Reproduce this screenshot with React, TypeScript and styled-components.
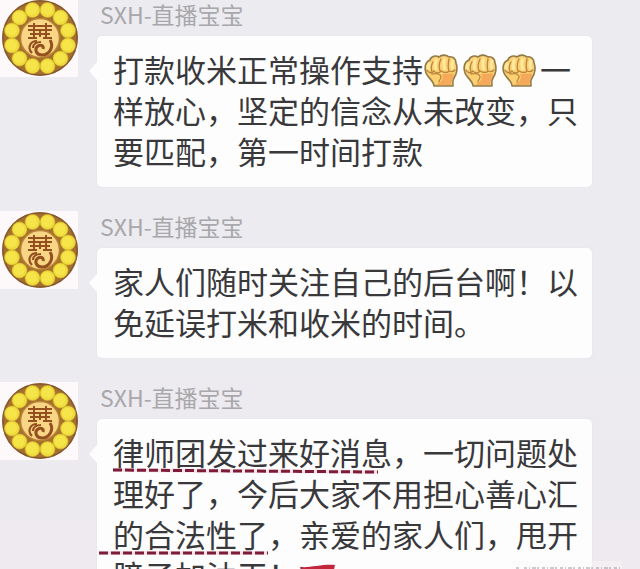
import React from 'react';
import styled, { createGlobalStyle } from 'styled-components';

const GlobalStyle = createGlobalStyle`
  * { box-sizing: border-box; }
  html, body, #root { height: 100%; }
  body {
    margin: 0;
    overflow: hidden;
    background: #ecebef;
    font-family: "Noto Sans CJK SC", "Noto Sans", sans-serif;
  }
`;

const Screen = styled.main`
  position: relative;
  height: 100%;
  overflow: hidden;
  background: linear-gradient(#ecebf0, #ecebef 60%, #eeeaef);
`;

const MessageList = styled.ul`
  display: flex;
  flex-direction: column;
  gap: 24px;
  margin: -1px 0 0;
  padding: 0;
  list-style: none;
`;

const Message = styled.li`
  display: flex;
  align-items: flex-start;
  gap: 19px;
  padding-right: 48px;
`;

const AvatarFrame = styled.svg`
  flex: none;
  display: block;
  width: 78px;
  height: 78px;
  background: #fdf9fa;
`;

const Body = styled.div`
  flex: 1;
  min-width: 0;
`;

const Sender = styled.div`
  height: 37px;
  padding: 0 3px;
  font-size: 23px;
  line-height: 31px;
  color: #a8a7aa;
`;

const Bubble = styled.div`
  position: relative;
  padding: 12px 8px 16px 16px;
  border-radius: 5px;
  background: #fdfdfe;
  box-shadow: 0 0 2px #e2e1e5;

  &::before {
    content: "";
    position: absolute;
    left: -8px;
    top: 26px;
    border: 9px solid transparent;
    border-left-width: 0;
    border-right: 8px solid #fdfdfe;
  }
`;

const Text = styled.p`
  margin: 0;
  font-size: 31px;
  line-height: 41px;
  font-weight: 400;
  color: #39383b;
`;

const Marked = styled.span`
  position: relative;
`;

const Underline = styled.svg<{ $lead: number; $trim: number }>`
  position: absolute;
  left: ${({ $lead }) => -$lead}px;
  bottom: 0;
  width: calc(100% + ${({ $lead, $trim }) => $lead - $trim}px);
  height: 6px;
  overflow: visible;
`;

const Emoji = styled.svg`
  display: inline-block;
  width: 39px;
  height: 34px;
  vertical-align: -6px;
`;

const CornerMark = styled.svg`
  position: absolute;
  right: 18px;
  bottom: 0;
  width: 110px;
  height: 8px;
`;

const beads = Array.from({ length: 12 }, (_, i) => {
  const a = ((i * 30 + 15) * Math.PI) / 180;
  return { x: 40 + 29 * Math.sin(a), y: 39 - 29 * Math.cos(a) };
});

function Avatar() {
  return (
    <AvatarFrame viewBox="0 0 78 78" role="img" aria-label="善">
      <circle cx="40" cy="39" r="38" fill="#a4702c" />
      <circle cx="40" cy="39" r="37" fill="none" stroke="#855a35" strokeWidth="1.5" />
      {beads.map((b, i) => (
        <g key={i}>
          <circle cx={b.x} cy={b.y} r="7.5" fill="#efdc3c" stroke="#d5b530" strokeWidth="0.6" />
          <circle cx={b.x - 0.5} cy={b.y - 0.5} r="5.5" fill="#f5e548" />
        </g>
      ))}
      <circle cx="40" cy="39" r="19.5" fill="#f9d685" stroke="#b98235" strokeWidth="1.5" />
      <g fill="none" stroke="#94501f" strokeWidth="2">
        <path d="M28 27H52M28 31H52M30 35H50M28 39H37M43 39H52" />
        <path d="M34 24V39M46 24V39M40 31V38" />
        <path d="M50 41C54 47 50 56 42 56C36 56 34 50 38 47C41 45 44 47 43 50" strokeWidth="3" />
        <path d="M37 42C30 42 27 49 32 54M41 43C37 43 33 45 33 49" strokeWidth="2.2" />
      </g>
    </AvatarFrame>
  );
}

function Fist() {
  return (
    <Emoji viewBox="0 0 39 34" role="img" aria-label="拳头">
      <path
        d="M11 32C11 27 5 24 3 19C1 14 2 8 7 6C8 2 13 1 16 3C19 0 24 1 26 3C30 2 33 5 33 9C35 13 34 20 31 24C29 27 30 29 30 32Z"
        fill="#fccf72" stroke="#8f7a48" strokeWidth="1.6" strokeLinejoin="round"
      />
      <path d="M19 20C24 20 29 19 31 20L28 31H13C19 28 21 24 19 20Z" fill="#f5a95a" />
      <path d="M7 9C5 11 5 14 6 16M14 5C12 8 12 13 13 16M22 4C20 8 21 13 22 16M30 6C29 9 29 13 30 15" fill="none" stroke="#ffeaa0" strokeWidth="3" />
      <path d="M10 8C8 11 8 15 9 18M18 5C16 9 16 14 17 17M26 5C25 10 25 14 26 17M4 16C6 20 10 19 11 17C13 20 17 19 18 17C21 19 25 19 26 17C28 18 30 18 32 16M9 20C14 19 18 20 18 23C18 25 16 26 16 28" fill="none" stroke="#b8873d" strokeWidth="1.3" strokeLinecap="round" />
    </Emoji>
  );
}

function Flag() {
  return (
    <Emoji viewBox="0 0 39 34" role="img" aria-label="红旗">
      <path d="M2 7C10 8 24 4 36 5L32 24C22 22 14 28 7 25Z" fill="#c2263c" />
      <path d="M2 7L9 33" stroke="#9b3040" strokeWidth="2" />
    </Emoji>
  );
}

function Dashes({ lead = 0, trim = 0, tilt = 0 }: { lead?: number; trim?: number; tilt?: number }) {
  return (
    <Underline $lead={lead} $trim={trim} viewBox="0 0 100 6" preserveAspectRatio="none" aria-hidden="true">
      <line
        x1="0" y1={3 - tilt} x2="100" y2={3 + tilt}
        stroke="#eebdc8" strokeWidth="4" strokeOpacity="0.4" vectorEffect="non-scaling-stroke"
      />
      <line
        x1="0" y1={3 - tilt} x2="100" y2={3 + tilt}
        stroke="#7d1c38" strokeWidth="3" strokeDasharray="9 3" vectorEffect="non-scaling-stroke"
      />
    </Underline>
  );
}

function ChatMessage({ children }: { children: React.ReactNode }) {
  return (
    <Message>
      <Avatar />
      <Body>
        <Sender>SXH-直播宝宝</Sender>
        <Bubble><Text>{children}</Text></Bubble>
      </Body>
    </Message>
  );
}

export default function App() {
  return (
    <Screen>
      <GlobalStyle />
      <MessageList>
        <ChatMessage>
          打款收米正常操作支持<Fist /><Fist /><Fist />一样放心，坚定的信念从未改变，只要匹配，第一时间打款
        </ChatMessage>
        <ChatMessage>家人们随时关注自己的后台啊！以免延误打米和收米的时间。</ChatMessage>
        <ChatMessage>
          <Marked>律师团发过来好消息<Dashes trim={14} tilt={1} /></Marked>，一切问题处理好了，今后大家不用担心善心汇<Marked>的合法性了<Dashes lead={14} /></Marked>，亲爱的家人们，甩开膀子加油干！<Flag />
        </ChatMessage>
      </MessageList>
      <CornerMark viewBox="0 0 110 8" aria-hidden="true">
        <rect width="110" height="8" fill="#fbf8fb" fillOpacity="0.4" />
        <path d="M4 7H7M12 7H110" stroke="#77727a" strokeOpacity="0.7" strokeWidth="1" strokeDasharray="3 2 1 2 4 1 2 3" />
      </CornerMark>
    </Screen>
  );
}
